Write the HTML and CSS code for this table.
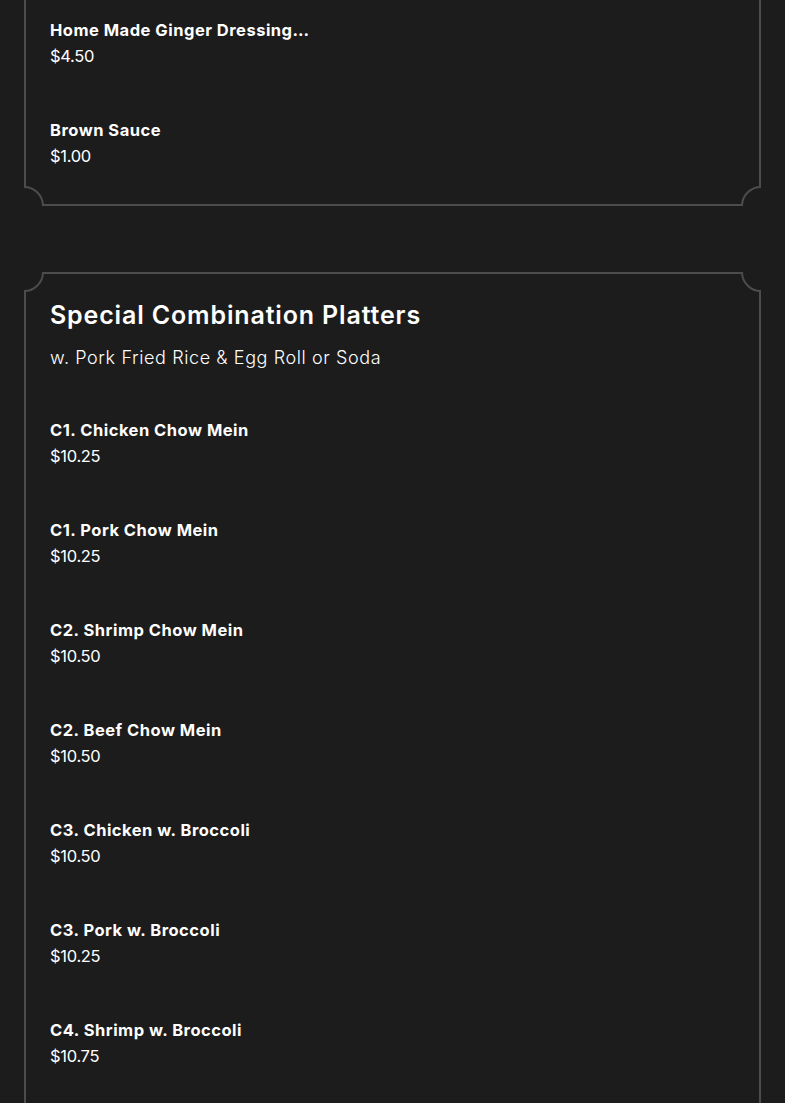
FILE: index.html
```html
<!DOCTYPE html>
<html lang="en">
<head>
<meta charset="utf-8">
<title>Menu</title>
<link rel="stylesheet" href="styles.css">
</head>
<body>
<main class="menu">
  <section class="card card-first">
    <div class="card-inner">
      <div class="item">
        <div class="item-name">Home Made Ginger Dressing…</div>
        <div class="item-price">$4.50</div>
      </div>
      <div class="item">
        <div class="item-name">Brown Sauce</div>
        <div class="item-price">$1.00</div>
      </div>
    </div>
    <span class="corner tl"></span><span class="corner tr"></span>
    <span class="corner bl"></span><span class="corner br"></span>
  </section>

  <section class="card card-last">
    <div class="card-inner">
      <h2 class="cat-title">Special Combination Platters</h2>
      <p class="cat-desc">w. Pork Fried Rice &amp; Egg Roll or Soda</p>
      <div class="item">
        <div class="item-name">C1. Chicken Chow Mein</div>
        <div class="item-price">$10.25</div>
      </div>
      <div class="item">
        <div class="item-name">C1. Pork Chow Mein</div>
        <div class="item-price">$10.25</div>
      </div>
      <div class="item">
        <div class="item-name">C2. Shrimp Chow Mein</div>
        <div class="item-price">$10.50</div>
      </div>
      <div class="item">
        <div class="item-name">C2. Beef Chow Mein</div>
        <div class="item-price">$10.50</div>
      </div>
      <div class="item">
        <div class="item-name">C3. Chicken w. Broccoli</div>
        <div class="item-price">$10.50</div>
      </div>
      <div class="item">
        <div class="item-name">C3. Pork w. Broccoli</div>
        <div class="item-price">$10.25</div>
      </div>
      <div class="item">
        <div class="item-name">C4. Shrimp w. Broccoli</div>
        <div class="item-price">$10.75</div>
      </div>
    </div>
    <span class="corner tl"></span><span class="corner tr"></span>
    <span class="corner bl"></span><span class="corner br"></span>
  </section>
</main>
</body>
</html>
```
FILE: styles.css
```css
html, body {
  margin: 0;
  padding: 0;
  background: #1c1c1c;
  color: #ffffff;
  font-family: "Inter", "Liberation Sans", sans-serif;
  overflow: hidden;
}

.menu {
  display: flex;
  flex-direction: column;
  gap: 66px;
  padding: 0 24px;
}

.card {
  position: relative;
  overflow: hidden;
}

.card-first {
  margin-top: -60px;
}

.card-inner {
  border: 2px solid #4c4c4c;
  padding: 26px 24px 35px;
  display: flex;
  flex-direction: column;
  gap: 48px;
}

.card-first .card-inner {
  padding-top: 75px;
}

.card-last .card-inner {
  padding-bottom: 90px;
}

.corner {
  position: absolute;
  width: 36px;
  height: 36px;
  border: 2px solid #4c4c4c;
  border-radius: 50%;
  background: #1c1c1c;
}
.corner.tl { top: -20px; left: -20px; }
.corner.tr { top: -20px; right: -20px; }
.corner.bl { bottom: -20px; left: -20px; }
.corner.br { bottom: -20px; right: -20px; }

.cat-title {
  margin: 0;
  font-size: 25px;
  line-height: 30px;
  font-weight: 600;
  letter-spacing: 0.85px;
}

.cat-desc {
  margin: -33px 0 -2px;
  font-size: 18px;
  line-height: 26px;
  font-weight: 300;
  letter-spacing: 0.6px;
}

.item-name {
  font-size: 16.5px;
  line-height: 26px;
  font-weight: 700;
  letter-spacing: 0.5px;
}

.item-price {
  font-size: 16.5px;
  line-height: 26px;
  font-weight: 400;
  letter-spacing: -0.3px;
}
```
